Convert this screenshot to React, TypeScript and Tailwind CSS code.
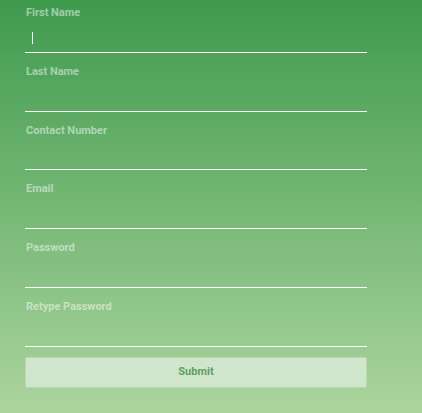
import React from "react";

const fields = ["First Name", "Last Name", "Contact Number", "Email", "Password", "Retype Password"];

export default function App() {
  return (
    <div
      className="w-[422px] h-[413px] overflow-hidden bg-[linear-gradient(to_bottom,#3f9a4e,#acd59e)] pl-[25px] pt-[6px]"
      style={{ fontFamily: 'Roboto, "Liberation Sans", Arial, sans-serif' }}
    >
      <form className="w-[342px] flex flex-col" onSubmit={(e) => e.preventDefault()}>
        {fields.map((f, i) => (
          <div key={f} className={i === 0 ? "flex flex-col" : "flex flex-col mt-[12px]"}>
            <label className="pl-[1px] text-[11px] leading-[13px] font-bold text-white/50">{f}</label>
            <div className="relative h-[33.8px] border-b border-white">
              {i === 0 && <div className="absolute left-[7px] top-[13px] w-px h-[12px] bg-white" />}
            </div>
          </div>
        ))}
        <button
          type="submit"
          className="mt-[10px] h-[31px] w-full rounded-[2px] border border-[#b9d8b2] bg-[#d0e6cc] text-[11px] font-bold text-[#5f9e63]"
        >
          Submit
        </button>
      </form>
    </div>
  );
}
